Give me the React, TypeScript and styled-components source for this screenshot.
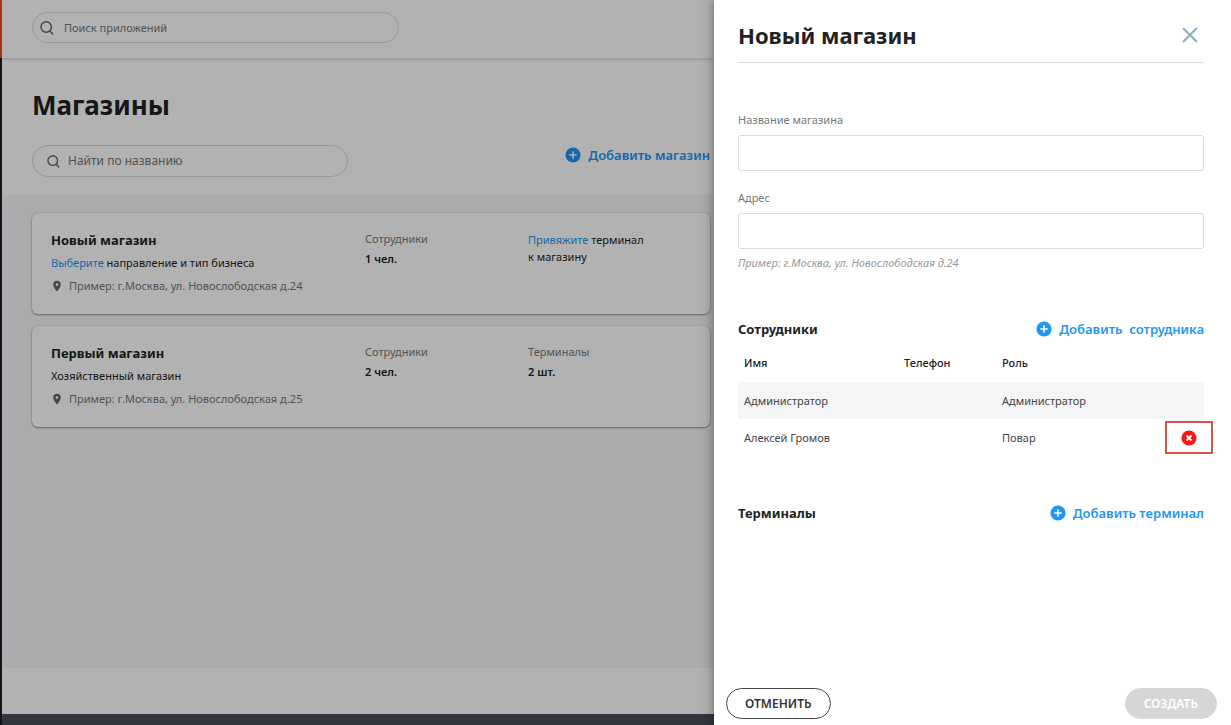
import React from "react";
import styled, { createGlobalStyle } from "styled-components";

const GlobalStyle = createGlobalStyle`
  *, *::before, *::after { box-sizing: border-box; }
  body { margin: 0; background: #fff; color: #222; font-family: "Noto Sans", "Open Sans", sans-serif; font-size: 12px; line-height: 16px; }
  h1, h2, h3, p { margin: 0; }
  button, input { font: inherit; color: inherit; }
`;

const Layout = styled.div`
  display: flex;
  min-height: 100vh;
`;

const Page = styled.div`
  position: relative;
  flex: 1;
  min-width: 0;
  display: flex;
  flex-direction: column;
  padding-left: 2px;
  background: linear-gradient(#ff4e20, #ff4e20) 0 0 / 2px 58px no-repeat,
    linear-gradient(#1f1c24, #1f1c24) 0 0 / 2px 100% no-repeat, #fff;
`;

const Dim = styled.div`
  position: absolute;
  inset: 0;
  background: rgba(0, 0, 0, 0.3);
  pointer-events: none;
`;

const TopBar = styled.header`
  display: flex;
  align-items: center;
  height: 58px;
  padding: 0 30px 3px;
  box-shadow: 0 1px 3px rgba(0, 0, 0, 0.2);
`;

const SearchBox = styled.label<{ $wide?: boolean }>`
  display: flex;
  align-items: center;
  gap: ${(p) => (p.$wide ? 10 : 8)}px;
  width: 100%;
  max-width: ${(p) => (p.$wide ? 367 : 316)}px;
  height: ${(p) => (p.$wide ? 31 : 32)}px;
  padding: 0 ${(p) => (p.$wide ? 7 : 14)}px;
  border: 1px solid #dadada;
  border-radius: 16px;
  font-size: ${(p) => (p.$wide ? 11 : 12)}px;
  color: #666;
  svg { flex: none; }
`;

const SearchInput = styled.input`
  flex: 1;
  min-width: 0;
  padding: 0;
  border: 0;
  outline: 0;
  background: none;
  &::placeholder { color: #777; opacity: 1; }
`;

const Hero = styled.section`
  padding: 29px 4px 18px 30px;
`;

const PageTitle = styled.h1`
  font-size: 26px;
  line-height: 36px;
  font-weight: 700;
`;

const HeroRow = styled.div`
  display: flex;
  justify-content: space-between;
  align-items: flex-start;
  gap: 16px;
  padding-top: 22px;
`;

const AddButton = styled.button`
  display: inline-flex;
  align-items: center;
  gap: 7px;
  padding: 0;
  border: 0;
  background: none;
  color: #2196f3;
  font-size: 13px;
  line-height: 20px;
  font-weight: 600;
  white-space: pre;
  cursor: pointer;
`;

const Stores = styled.main`
  flex: 1;
  display: flex;
  flex-direction: column;
  gap: 12px;
  padding: 18px 4px 18px 30px;
  background: #f4f5f7;
`;

const Card = styled.article`
  display: grid;
  grid-template-columns: 314fr 163fr 163fr;
  min-height: 101px;
  padding: 16px 19px;
  border-radius: 6px;
  background: #fff;
  box-shadow: 0 1px 2px rgba(0, 0, 0, 0.4), 0 0 2px rgba(0, 0, 0, 0.15);
`;

const CardTitle = styled.h2`
  font-size: 13px;
  line-height: 22px;
  font-weight: 700;
`;

const CardText = styled.p`
  font-size: 11px;
  line-height: 24px;
`;

const Address = styled.p`
  display: flex;
  align-items: center;
  gap: 6px;
  font-size: 11px;
  line-height: 22px;
  color: #777;
`;

const Stat = styled.div`
  font-size: 11px;
  line-height: 20px;
  color: #777;
  strong { display: block; font-weight: 600; color: #222; }
`;

const Notice = styled.p`
  padding-top: 2px;
  font-size: 11px;
  line-height: 17px;
`;

const Link = styled.a`
  color: #2196f3;
  text-decoration: none;
`;

const BottomGap = styled.div`
  height: 46px;
`;

const PageFooter = styled.footer`
  height: 11px;
  background: #494d5a;
`;

const Drawer = styled.aside`
  position: relative;
  display: flex;
  flex-direction: column;
  width: 42%;
  background: #fff;
  box-shadow: 0 0 12px rgba(0, 0, 0, 0.45);
`;

const DrawerBody = styled.div`
  flex: 1;
  padding: 0 27px 24px 24px;
`;

const DrawerHead = styled.header`
  display: flex;
  justify-content: space-between;
  align-items: center;
  height: 63px;
  padding: 8px 5px 0 0;
  border-bottom: 1px solid #dcdcdc;
`;

const DrawerTitle = styled.h2`
  font-size: 22px;
  line-height: 32px;
  font-weight: 700;
`;

const CloseButton = styled.button`
  display: flex;
  padding: 0;
  border: 0;
  background: none;
  color: #8fb1bb;
  cursor: pointer;
`;

const Fields = styled.div`
  display: flex;
  flex-direction: column;
  gap: 18px;
  padding: 48px 0;
`;

const Field = styled.div`
  display: flex;
  flex-direction: column;
  font-size: 11px;
  color: #777;
`;

const FieldLabel = styled.label`
  line-height: 18px;
  margin-bottom: 6px;
`;

const FieldInput = styled.input`
  width: 100%;
  height: 36px;
  padding: 0 12px;
  border: 1px solid #dcdcdc;
  border-radius: 3px;
  background: #fff;
`;

const Hint = styled.p`
  padding-top: 6px;
  line-height: 16px;
  font-style: italic;
  color: #999;
`;

const SectionHead = styled.div`
  display: flex;
  justify-content: space-between;
  align-items: center;
`;

const SectionTitle = styled.h3`
  font-size: 13px;
  line-height: 20px;
  font-weight: 700;
`;

const StaffTable = styled.table`
  width: 100%;
  margin: 5px 0 47px;
  border-collapse: collapse;
  table-layout: fixed;
  font-size: 11px;
  th, td { height: 37px; padding: 0 6px; text-align: left; font-weight: 400; color: #444; }
  th { height: 38px; font-weight: 500; color: #222; }
  tbody tr:nth-child(odd) { background: #f4f5f7; }
  th:nth-child(1) { width: 160px; }
  th:nth-child(2) { width: 98px; }
  th:nth-child(4) { width: 46px; }
`;

const RemoveButton = styled.button`
  position: relative;
  display: flex;
  margin-left: auto;
  margin-right: 1px;
  padding: 0;
  border: 0;
  background: none;
  cursor: pointer;
  &::after {
    content: "";
    position: absolute;
    inset: -9px -16px -8px;
    border: 2px solid #d0564b;
  }
`;

const Actions = styled.footer`
  display: flex;
  justify-content: space-between;
  padding: 0 14px 6px 12px;
`;

const ActionButton = styled.button<{ $outlined?: boolean }>`
  height: 31px;
  padding: 0 18px;
  border: 1px solid ${(p) => (p.$outlined ? "#444" : "#d6d6d6")};
  border-radius: 16px;
  background: ${(p) => (p.$outlined ? "#fff" : "#d6d6d6")};
  color: ${(p) => (p.$outlined ? "#333" : "#fff")};
  font-size: 12px;
  font-weight: 600;
`;

const SearchIcon = ({ size }: { size: number }) => (
  <svg width={size} height={size} viewBox="0 0 14 14" fill="none" stroke="currentColor" strokeWidth="1.5" aria-hidden="true">
    <circle cx="6.200" cy="6" r="5.200" />
    <path d="M9.800 9.700 13 13.400" />
  </svg>
);

const PlusIcon = () => (
  <svg width="16" height="16" viewBox="0 0 16 16" aria-hidden="true">
    <circle cx="8" cy="8" r="7.6" fill="#2196f3" />
    <path d="M8 4.3v7.4M4.3 8h7.4" stroke="#fff" strokeWidth="1.5" />
  </svg>
);

const PinIcon = () => (
  <svg width="12" height="12" viewBox="0 0 12 12" aria-hidden="true">
    <path fillRule="evenodd" fill="#666" d="M6 .8a3.8 3.8 0 0 0-3.8 3.8C2.200 7.400 6 11.500 6 11.500s3.800-4.100 3.800-6.900A3.800 3.800 0 0 0 6 .8Zm0 2.400a1.400 1.400 0 1 1 0 2.800 1.400 1.400 0 0 1 0-2.800Z" />
  </svg>
);

const RemoveIcon = () => (
  <svg width="16" height="16" viewBox="0 0 16 16" aria-hidden="true">
    <circle cx="8" cy="8" r="7.6" fill="#ff1414" />
    <path d="m5.500 5.500 5 5m0-5-5 5" stroke="#fff" strokeWidth="1.800" />
  </svg>
);

const CloseIcon = () => (
  <svg width="18" height="18" viewBox="0 0 18 18" fill="none" stroke="currentColor" strokeWidth="2.200" aria-hidden="true">
    <path d="m2 2 14 14m0-14-14 14" />
  </svg>
);

const staff = [
  { name: "Администратор", phone: "", role: "Администратор", removable: false },
  { name: "Алексей Громов", phone: "", role: "Повар", removable: true },
];

export default function App() {
  return (
    <>
      <GlobalStyle />
      <Layout>
        <Page>
          <TopBar>
            <SearchBox $wide>
              <SearchIcon size={14} />
              <SearchInput type="text" placeholder="Поиск приложений" aria-label="Поиск приложений" />
            </SearchBox>
          </TopBar>
          <Hero>
            <PageTitle>Магазины</PageTitle>
            <HeroRow>
              <SearchBox>
                <SearchIcon size={13} />
                <SearchInput type="text" placeholder="Найти по названию" aria-label="Найти по названию" />
              </SearchBox>
              <AddButton type="button"><PlusIcon />Добавить магазин</AddButton>
            </HeroRow>
          </Hero>
          <Stores>
            <Card>
              <div>
                <CardTitle>Новый магазин</CardTitle>
                <CardText><Link href="#type">Выберите</Link> направление и тип бизнеса</CardText>
                <Address><PinIcon />Пример: г.Москва, ул. Новослободская д.24</Address>
              </div>
              <Stat>Сотрудники<strong>1 чел.</strong></Stat>
              <Notice><Link href="#terminal">Привяжите</Link> терминал<br />к магазину</Notice>
            </Card>
            <Card>
              <div>
                <CardTitle>Первый магазин</CardTitle>
                <CardText>Хозяйственный магазин</CardText>
                <Address><PinIcon />Пример: г.Москва, ул. Новослободская д.25</Address>
              </div>
              <Stat>Сотрудники<strong>2 чел.</strong></Stat>
              <Stat>Терминалы<strong>2 шт.</strong></Stat>
            </Card>
          </Stores>
          <BottomGap />
          <PageFooter />
          <Dim />
        </Page>
        <Drawer>
          <DrawerBody>
            <DrawerHead>
              <DrawerTitle>Новый магазин</DrawerTitle>
              <CloseButton type="button" aria-label="Закрыть"><CloseIcon /></CloseButton>
            </DrawerHead>
            <Fields>
              <Field>
                <FieldLabel htmlFor="store-name">Название магазина</FieldLabel>
                <FieldInput id="store-name" type="text" />
              </Field>
              <Field>
                <FieldLabel htmlFor="store-address">Адрес</FieldLabel>
                <FieldInput id="store-address" type="text" />
                <Hint>Пример: г.Москва, ул. Новослободская д.24</Hint>
              </Field>
            </Fields>
            <SectionHead>
              <SectionTitle>Сотрудники</SectionTitle>
              <AddButton type="button"><PlusIcon />{"Добавить  сотрудника"}</AddButton>
            </SectionHead>
            <StaffTable>
              <thead>
                <tr><th>Имя</th><th>Телефон</th><th>Роль</th><th /></tr>
              </thead>
              <tbody>
                {staff.map((person) => (
                  <tr key={person.name}>
                    <td>{person.name}</td>
                    <td>{person.phone}</td>
                    <td>{person.role}</td>
                    <td>
                      {person.removable && (
                        <RemoveButton type="button" aria-label="Удалить"><RemoveIcon /></RemoveButton>
                      )}
                    </td>
                  </tr>
                ))}
              </tbody>
            </StaffTable>
            <SectionHead>
              <SectionTitle>Терминалы</SectionTitle>
              <AddButton type="button"><PlusIcon />Добавить терминал</AddButton>
            </SectionHead>
          </DrawerBody>
          <Actions>
            <ActionButton type="button" $outlined>ОТМЕНИТЬ</ActionButton>
            <ActionButton type="button" disabled>СОЗДАТЬ</ActionButton>
          </Actions>
        </Drawer>
      </Layout>
    </>
  );
}
